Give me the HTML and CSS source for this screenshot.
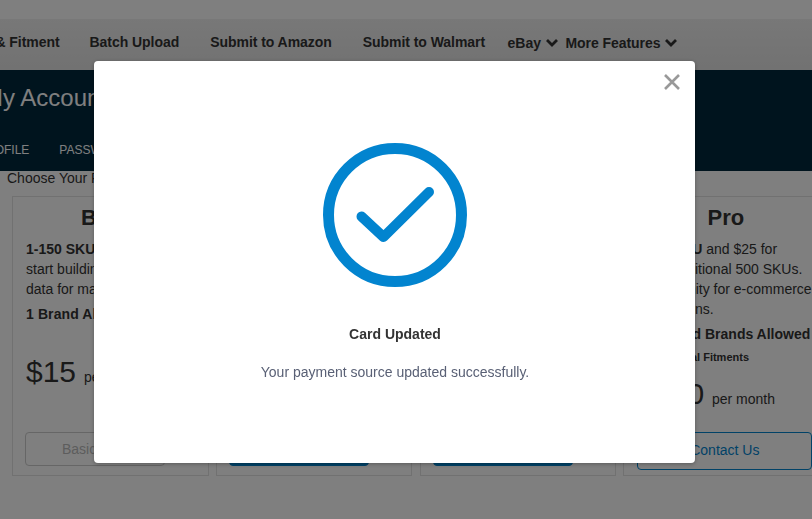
FILE: index.html
```html
<!DOCTYPE html>
<html lang="en">
<head>
<meta charset="utf-8">
<title>My Account</title>
<link rel="stylesheet" href="styles.css">
</head>
<body>
<div class="page">
  <div class="topbar"></div>
  <nav class="nav">
    <a class="nav-first">Attributes &amp; Fitment</a>
    <a>Batch Upload</a>
    <a>Submit to Amazon</a>
    <a>Submit to Walmart</a>
    <span class="menus">
      <a class="menu">eBay <svg class="chev" viewBox="0 0 14 10"><path d="M2 2l5 5 5-5"/></svg></a>
      <a class="menu">More Features <svg class="chev" viewBox="0 0 14 10"><path d="M2 2l5 5 5-5"/></svg></a>
    </span>
  </nav>
  <header class="hero">
    <h1>My Account</h1>
    <div class="tabs"><a>PROFILE</a><a>PASSWORD</a><a>BILLING</a></div>
  </header>
  <p class="choose">Choose Your Plan</p>
  <section class="plans">
    <article class="plan">
      <h2>Basic</h2>
      <p><b>1-150 SKUs</b> to<br>start building your<br>data for marketplaces</p>
      <p class="brands"><b>1 Brand Allowed</b></p>
      <div class="price"><span class="amount">$15</span> <span>per month</span></div>
      <a class="btn btn-off">Basic Plan</a>
    </article>
    <article class="plan">
      <h2>Standard</h2>
      <p><b>151-500 SKUs</b> to<br>grow your catalog<br>data for marketplaces</p>
      <p class="brands"><b>3 Brands Allowed</b></p>
      <div class="price"><span class="amount">$50</span> <span>per month</span></div>
      <a class="btn btn-solid">Upgrade</a>
    </article>
    <article class="plan">
      <h2>Premium</h2>
      <p><b>501-1000 SKUs</b> to<br>scale your catalog<br>data for marketplaces</p>
      <p class="brands"><b>5 Brands Allowed</b></p>
      <div class="price"><span class="amount">$99</span> <span>per month</span></div>
      <a class="btn btn-solid">Upgrade</a>
    </article>
    <article class="plan plan-pro">
      <h2>Pro</h2>
      <p><b>500+ SKU</b> and $25 for<br>each additional 500 SKUs.<br>Opportunity for e-commerce<br>integrations.</p>
      <p class="brands-pro"><b>Unlimited Brands Allowed</b></p>
      <p class="fitments"><b>Additional Fitments</b></p>
      <div class="price price-pro"><span class="amount">$250</span> <span>per month</span></div>
      <a class="btn btn-outline">Contact Us</a>
    </article>
  </section>
</div>
<div class="overlay">
  <div class="modal" role="dialog">
    <svg class="close" viewBox="0 0 18 18"><path d="M2 2l14 14M16 2L2 16"/></svg>
    <svg class="tick" viewBox="0 0 146 146">
      <circle cx="73" cy="73" r="66.5"/>
      <path class="tick-mark" d="M39.5 74.5l22 20.5 45.5-45"/>
    </svg>
    <h3>Card Updated</h3>
    <p>Your payment source updated successfully.</p>
  </div>
</div>
</body>
</html>
```
FILE: styles.css
```css
* { box-sizing: border-box; }
html, body { margin: 0; height: 100%; }
body {
  overflow: hidden;
  background: #fff;
  color: #333;
  font-family: "Liberation Sans", Arial, sans-serif;
  font-size: 14px;
  line-height: 20px;
}
.page { width: 830px; height: 519px; overflow: hidden; }
.topbar { height: 19px; background: #fff; }
.nav {
  height: 51px;
  width: 812px;
  display: flex;
  align-items: center;
  background: linear-gradient(#f0f0f0, #e4e4e4);
  font-size: 14px;
  font-weight: bold;
  color: #333;
  padding-bottom: 5px;
  white-space: nowrap;
  letter-spacing: -.05px;
}
.nav a { margin-right: 31px; }
.nav .nav-first { margin-left: -74px; margin-right: 30px; }
.menus { display: flex; margin-left: -8.5px; padding-top: 2px; }
.nav .menu { margin-right: 6.5px; display: flex; align-items: center; gap: 4px; }
.chev { width: 14px; height: 10px; fill: none; stroke: #333; stroke-width: 2.8; }
.hero {
  height: 101px;
  width: 812px;
  background: #00283c;
  color: #fff;
  overflow: hidden;
}
.hero h1 {
  margin: 14px 0 0 -17px;
  font-size: 24px;
  line-height: 28px;
  font-weight: normal;
}
.tabs {
  display: flex;
  gap: 30px;
  margin: 30px 0 0 -22px;
  font-size: 12px;
  line-height: 16px;
}
.choose { margin: 0 0 0 7px; height: 25px; line-height: 14px; }
.plans { display: flex; gap: 7.2px; margin-left: 12px; height: 280px; }
.plan {
  width: 196.6px;
  flex: none;
  border: 1px solid #e3e3e3;
  padding: 8px 13px 9px 13px;
  display: flex;
  flex-direction: column;
}
.plan h2 {
  margin: 0 0 8px;
  font-size: 22px;
  line-height: 26px;
  text-align: center;
  color: #333;
}
.plan p { margin: 0; }
.plan .brands { margin-top: 5px; letter-spacing: .1px; }
.price { margin-top: 30px; line-height: 36px; }
.amount { font-size: 30px; margin-right: 4px; }
.btn {
  margin-top: auto;
  margin-left: -1px;
  width: 140px;
  height: 34px;
  border-radius: 4px;
  display: block;
  text-align: center;
  line-height: 32px;
}
.btn-off { border: 1px solid #ccc; color: #bbb; }
.btn-solid { background: #0284cf; color: #fff; border: 1px solid #0284cf; }
.plan-pro { padding-bottom: 5px; width: 205px; }
.plan .brands-pro { margin-top: 5px; }
.plan .fitments { font-size: 11px; padding-left: 9px; margin-top: 3px; }
.price-pro { margin-top: 9px; }
.btn-outline {
  margin-left: 0;
  width: 175px;
  height: 38px;
  border: 1px solid #0284cf;
  color: #0284cf;
  line-height: 35px;
}
.overlay {
  position: fixed;
  inset: 0;
  background: rgba(0, 0, 0, .5);
  padding: 61px 0 0 94px;
}
.modal {
  position: relative;
  width: 601px;
  height: 402px;
  background: #fff;
  border-radius: 4px;
  box-shadow: 0 1px 4px rgba(0, 0, 0, .3);
  padding: 81px 0 0 1px;
  text-align: center;
}
.close {
  position: absolute;
  top: 12px;
  right: 14px;
  width: 18px;
  height: 18px;
  fill: none;
  stroke: #999;
  stroke-width: 2.6;
}
.tick {
  display: block;
  width: 146px;
  height: 146px;
  margin: 0 auto;
  fill: none;
  stroke: #0284cf;
  stroke-width: 11;
  stroke-linecap: round;
  stroke-linejoin: round;
}
.tick .tick-mark { stroke-width: 10; }
.modal h3 {
  margin: 36px 0 0;
  font-size: 14px;
  line-height: 20px;
  font-weight: bold;
  color: #333;
}
.modal p {
  margin: 18px 0 0;
  font-size: 14px;
  line-height: 20px;
  color: #596075;
}
```
